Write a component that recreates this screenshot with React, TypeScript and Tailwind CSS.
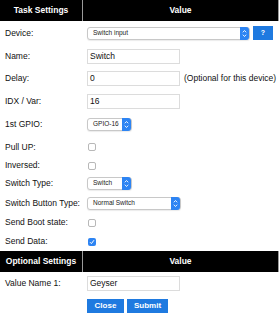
import React from "react";

const font = { fontFamily: '"Liberation Sans", Arial, sans-serif' };

function Arrows() {
  return (
    <span className="flex h-[13px] w-[9px] items-center justify-center rounded-r-[3px] bg-[#2d84f3]">
      <svg width="5" height="9" viewBox="0 0 5 9">
        <path d="M0.8 3.3 L2.5 1.5 L4.2 3.3 M0.8 5.7 L2.5 7.5 L4.2 5.7" stroke="white" strokeWidth="0.9" fill="none" />
      </svg>
    </span>
  );
}

function Select({ label, width }: { label: string; width: string }) {
  return (
    <div className={`flex h-[13px] items-center justify-between rounded-[3px] border border-[#c8c8c8] bg-white shadow-[0_1px_1px_rgba(0,0,0,0.08)] ${width}`}>
      <span className="pl-[5px] text-[6.5px] leading-none text-[#222]">{label}</span>
      <Arrows />
    </div>
  );
}

function Input({ value }: { value: string }) {
  return (
    <div className="flex h-[15px] w-[93px] items-center border border-[#dcdcdc] bg-white pl-[2px] text-[8.5px] leading-none text-[#111]">
      {value}
    </div>
  );
}

function Check({ checked }: { checked?: boolean }) {
  return checked ? (
    <span className="flex h-[8px] w-[8px] items-center justify-center rounded-[2px] bg-[#2d84f3]">
      <svg width="6" height="6" viewBox="0 0 6 6">
        <path d="M1 3.2 L2.4 4.6 L5 1.2" stroke="white" strokeWidth="1" fill="none" />
      </svg>
    </span>
  ) : (
    <span className="block h-[8px] w-[8px] rounded-[2px] border border-[#b8b8b8] bg-white" />
  );
}

function Row({ label, h, children }: { label: string; h: string; children?: React.ReactNode }) {
  return (
    <div className={`flex items-center ${h}`}>
      <div className="w-[87px] pl-[5px] text-[8.5px] leading-none text-[#111]">{label}</div>
      <div className="flex flex-1 items-center">{children}</div>
    </div>
  );
}

function Header({ a, b }: { a: string; b: string }) {
  return (
    <div className="flex h-[21px] bg-black text-[8.5px] font-bold text-white">
      <div className="flex w-[83px] items-center justify-center border-r border-[#9a9a9a]">{a}</div>
      <div className="flex flex-1 items-center justify-center border-r border-[#9a9a9a]">{b}</div>
    </div>
  );
}

export default function App() {
  return (
    <div className="h-[320px] w-[279px] overflow-hidden bg-white" style={font}>
      <Header a="Task Settings" b="Value" />
      <Row label="Device:" h="h-[24px]">
        <Select label="Switch input" width="w-[163px]" />
        <span className="ml-[3px] flex h-[14px] w-[20px] items-center justify-center bg-[#1f7ae0] text-[7px] font-bold text-white">?</span>
      </Row>
      <Row label="Name:" h="h-[22px]">
        <Input value="Switch" />
      </Row>
      <Row label="Delay:" h="h-[23px]">
        <Input value="0" />
        <span className="ml-[4px] whitespace-nowrap text-[8.5px] leading-none text-[#111]">(Optional for this device)</span>
      </Row>
      <Row label="IDX / Var:" h="h-[22px]">
        <Input value="16" />
      </Row>
      <Row label="1st GPIO:" h="h-[25px]">
        <Select label="GPIO-16" width="w-[45px]" />
      </Row>
      <Row label="Pull UP:" h="h-[20px]">
        <span className="ml-[1px]"><Check /></span>
      </Row>
      <Row label="Inversed:" h="h-[17px]">
        <span className="ml-[1px]"><Check /></span>
      </Row>
      <Row label="Switch Type:" h="h-[19px]">
        <Select label="Switch" width="w-[45px]" />
      </Row>
      <Row label="Switch Button Type:" h="h-[20px]">
        <Select label="Normal Switch" width="w-[94px]" />
      </Row>
      <Row label="Send Boot state:" h="h-[19px]">
        <span className="ml-[1px]"><Check /></span>
      </Row>
      <Row label="Send Data:" h="h-[19px]">
        <span className="ml-[1px]"><Check checked /></span>
      </Row>
      <Header a="Optional Settings" b="Value" />
      <Row label="Value Name 1:" h="h-[22px]">
        <Input value="Geyser" />
      </Row>
      <div className="flex h-[24px] items-center pl-[87px]">
        <span className="flex h-[14px] w-[37px] items-center justify-center bg-[#1f7ae0] text-[8px] font-bold text-white">Close</span>
        <span className="ml-[3px] flex h-[14px] w-[41px] items-center justify-center bg-[#1f7ae0] text-[8px] font-bold text-white">Submit</span>
      </div>
    </div>
  );
}
